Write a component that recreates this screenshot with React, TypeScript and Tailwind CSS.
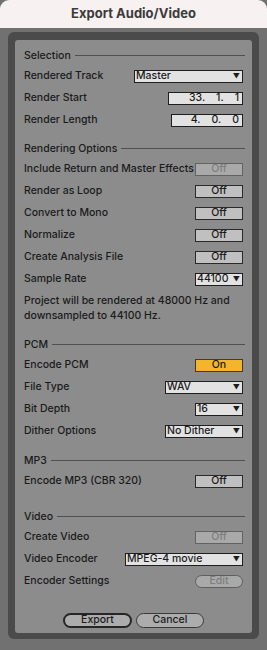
import type { ReactNode } from "react";

const font = { fontFamily: "Inter, 'Liberation Sans', Arial, sans-serif" };

function Header({ title, className = "" }: { title: string; className?: string }) {
  return (
    <div className={`flex h-[19px] items-center gap-[4px] ${className}`}>
      <span>{title}</span>
      <div className="mr-[-2px] h-px flex-1 bg-[#505050]" />
    </div>
  );
}

function Row({ label, children }: { label: string; children?: ReactNode }) {
  return (
    <div className="flex h-[22px] items-center justify-between">
      <span className="whitespace-nowrap">{label}</span>
      {children}
    </div>
  );
}

function Toggle({ on = false, disabled = false }: { on?: boolean; disabled?: boolean }) {
  const tone = on
    ? "bg-[#f4b42c] border-[#3a3a3a] text-[#1a1a1a]"
    : disabled
      ? "bg-[#a9a9a9] border-[#626262] text-[#7e7e7e]"
      : "bg-[#c0c0c0] border-[#2a2a2a] text-[#1a1a1a]";
  return (
    <div
      className={`flex h-[13px] w-[48px] items-center justify-center border leading-none ${tone}`}
    >
      {on ? "On" : "Off"}
    </div>
  );
}

function Select({ value, width }: { value: string; width: string }) {
  return (
    <div
      className={`flex h-[13px] items-center justify-between border border-[#1e1e1e] bg-[#e2e2e2] pl-[1px] pr-[2px] leading-none ${width}`}
    >
      <span>{value}</span>
      <span className="text-[7px]">▼</span>
    </div>
  );
}

function NumberField({ parts, width }: { parts: string[]; width: string }) {
  return (
    <div
      className={`flex h-[13px] items-center justify-end gap-[11px] border border-[#1e1e1e] bg-[#e2e2e2] pr-[3px] leading-none ${width}`}
    >
      {parts.map((p, i) => (
        <span key={i}>{p}</span>
      ))}
    </div>
  );
}

export default function App() {
  return (
    <div
      className="flex h-[650px] w-[267px] flex-col bg-[#717171] text-[10.5px] font-medium text-[#1b1b1b]"
      style={font}
    >
      {/* Title bar */}
      <div className="flex h-[28px] items-center justify-center rounded-t-[9px] bg-[#f7f1f1] text-[13px] font-bold text-[#3b3b3b]">
        Export Audio/Video
      </div>

      <div className="px-[8px] pt-[4px]">
        <div className="rounded-[6px] bg-[#4b4b4b] pb-[6px] pl-[7px] pr-[7px] pt-[8px]">
          <div className="flex h-[593px] flex-col rounded-[3px] bg-[#8c8c8c] px-[9px] pt-[6px]">
            <Header title="Selection" />
            <Row label="Rendered Track">
              <Select value="Master" width="w-[109px]" />
            </Row>
            <Row label="Render Start">
              <NumberField parts={["33.", "1.", "1"]} width="w-[75px]" />
            </Row>
            <Row label="Render Length">
              <NumberField parts={["4.", "0.", "0"]} width="w-[72px]" />
            </Row>

            <Header title="Rendering Options" className="mt-[8px]" />
            <Row label="Include Return and Master Effects">
              <Toggle disabled />
            </Row>
            <Row label="Render as Loop">
              <Toggle />
            </Row>
            <Row label="Convert to Mono">
              <Toggle />
            </Row>
            <Row label="Normalize">
              <Toggle />
            </Row>
            <Row label="Create Analysis File">
              <Toggle />
            </Row>
            <Row label="Sample Rate">
              <Select value="44100" width="w-[48px]" />
            </Row>
            <p className="mt-[3px] leading-[15px]">
              Project will be rendered at 48000 Hz and
              <br />
              downsampled to 44100 Hz.
            </p>

            <Header title="PCM" className="mt-[12px]" />
            <Row label="Encode PCM">
              <Toggle on />
            </Row>
            <Row label="File Type">
              <Select value="WAV" width="w-[78px]" />
            </Row>
            <Row label="Bit Depth">
              <Select value="16" width="w-[48px]" />
            </Row>
            <Row label="Dither Options">
              <Select value="No Dither" width="w-[78px]" />
            </Row>

            <Header title="MP3" className="mt-[9px]" />
            <Row label="Encode MP3 (CBR 320)">
              <Toggle />
            </Row>

            <Header title="Video" className="mt-[15px]" />
            <Row label="Create Video">
              <Toggle disabled />
            </Row>
            <Row label="Video Encoder">
              <Select value="MPEG-4 movie" width="w-[118px]" />
            </Row>
            <Row label="Encoder Settings">
              <div className="flex h-[13px] w-[48px] items-center justify-center rounded-full border border-[#5e5e5e] bg-[#a9a9a9] leading-none text-[#7e7e7e]">
                Edit
              </div>
            </Row>

            <div className="mt-[21px] flex justify-center gap-[4px]">
              <div className="flex h-[15px] w-[69px] items-center justify-center rounded-full border-2 border-[#262626] bg-[#acacac] leading-none">
                Export
              </div>
              <div className="flex h-[15px] w-[68px] items-center justify-center rounded-full border border-[#3a3a3a] bg-[#acacac] leading-none">
                Cancel
              </div>
            </div>
          </div>
        </div>
      </div>
    </div>
  );
}
